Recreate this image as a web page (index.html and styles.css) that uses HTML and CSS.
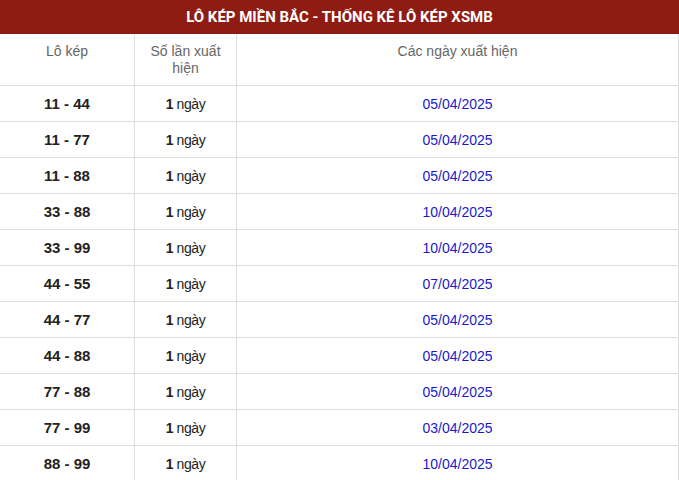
FILE: index.html
```html
<!DOCTYPE html>
<html lang="vi">
<head>
<meta charset="utf-8">
<title>Lô kép miền Bắc</title>
<link rel="stylesheet" href="styles.css">
</head>
<body>
<div class="box">
  <h2 class="title">LÔ KÉP MIỀN BẮC - THỐNG KÊ LÔ KÉP XSMB</h2>
  <table class="stats">
    <thead>
      <tr><th class="c1">Lô kép</th><th class="c2">Số lần xuất hiện</th><th class="c3">Các ngày xuất hiện</th></tr>
    </thead>
    <tbody>
      <tr><td class="pair">11 - 44</td><td class="count"><b>1</b> ngày</td><td class="date">05/04/2025</td></tr>
      <tr><td class="pair">11 - 77</td><td class="count"><b>1</b> ngày</td><td class="date">05/04/2025</td></tr>
      <tr><td class="pair">11 - 88</td><td class="count"><b>1</b> ngày</td><td class="date">05/04/2025</td></tr>
      <tr><td class="pair">33 - 88</td><td class="count"><b>1</b> ngày</td><td class="date">10/04/2025</td></tr>
      <tr><td class="pair">33 - 99</td><td class="count"><b>1</b> ngày</td><td class="date">10/04/2025</td></tr>
      <tr><td class="pair">44 - 55</td><td class="count"><b>1</b> ngày</td><td class="date">07/04/2025</td></tr>
      <tr><td class="pair">44 - 77</td><td class="count"><b>1</b> ngày</td><td class="date">05/04/2025</td></tr>
      <tr><td class="pair">44 - 88</td><td class="count"><b>1</b> ngày</td><td class="date">05/04/2025</td></tr>
      <tr><td class="pair">77 - 88</td><td class="count"><b>1</b> ngày</td><td class="date">05/04/2025</td></tr>
      <tr><td class="pair">77 - 99</td><td class="count"><b>1</b> ngày</td><td class="date">03/04/2025</td></tr>
      <tr><td class="pair">88 - 99</td><td class="count"><b>1</b> ngày</td><td class="date">10/04/2025</td></tr>
    </tbody>
  </table>
</div>
</body>
</html>
```
FILE: styles.css
```css
html, body {
  margin: 0;
  padding: 0;
  background: #fff;
}
body {
  font-family: "Liberation Sans", Arial, sans-serif;
  font-size: 14px;
  color: #222;
}
.box {
  width: 679px;
}
.title {
  margin: 0;
  height: 34px;
  line-height: 34px;
  background: #8f1c13;
  color: #fff;
  font-family: Roboto, "Liberation Sans", sans-serif;
  font-weight: 700;
  font-size: 15px;
  text-align: center;
}
.stats {
  width: 679px;
  border-collapse: collapse;
  table-layout: fixed;
}
.stats th, .stats td {
  border-bottom: 1px solid #ddd;
  border-right: 1px solid #ddd;
  text-align: center;
  padding: 0;
}
.stats th {
  height: 42px;
  vertical-align: top;
  font-weight: 400;
  color: #666;
  line-height: 17px;
  padding: 9px 14px 0;
}
.c1 { width: 106px; }
.c2 { width: 73px; }
.stats td {
  height: 35px;
  vertical-align: middle;
}
.pair {
  font-weight: 700;
  font-size: 15px;
  color: #222;
}
.count {
  font-size: 14px;
  letter-spacing: -0.4px;
  padding-left: 3px;
}
.count b {
  font-weight: 700;
}
.date {
  color: #1a1acc;
}
```
